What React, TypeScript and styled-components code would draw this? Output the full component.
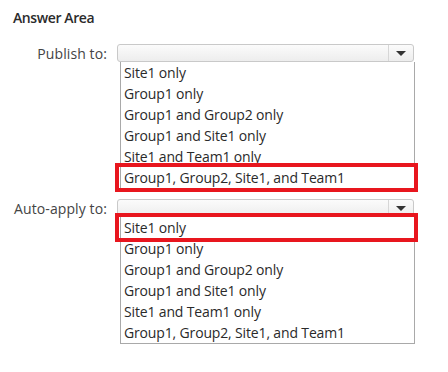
import React from 'react'
import styled, { createGlobalStyle } from 'styled-components'

const GlobalStyle = createGlobalStyle`
  body {
    margin: 0;
    background: #ffffff;
    font-family: "Open Sans", "Noto Sans", sans-serif;
  }
`

const Page = styled.div`
  width: 448px;
  height: 372px;
  padding: 8px 0 0 13px;
  box-sizing: border-box;
  background: #fff;
`

const Title = styled.div`
  font-size: 14px;
  line-height: 20px;
  font-weight: 600;
  color: #2b2b2b;
  letter-spacing: -0.4px;
`

const Form = styled.div`
  margin-top: 16px;
  display: grid;
  grid-template-columns: 104px 297px;
  row-gap: 10px;
`

const Label = styled.div`
  text-align: right;
  padding: 1px 10px 0 0;
  font-size: 14px;
  line-height: 18px;
  color: #444;
  letter-spacing: 0.1px;
  white-space: nowrap;
`

const Control = styled.div`
  display: flex;
  flex-direction: column;
`

const Select = styled.div`
  height: 18px;
  box-sizing: border-box;
  border: 1px solid #c9c9c9;
  border-radius: 3px;
  background: linear-gradient(#fbfbfb, #ededed);
  display: flex;
  justify-content: flex-end;
`

const ArrowBox = styled.div`
  width: 24px;
  border-left: 1px solid #d6d6d6;
  display: flex;
  align-items: center;
  justify-content: center;
`

const Arrow = styled.div`
  width: 0;
  height: 0;
  border-left: 5px solid transparent;
  border-right: 5px solid transparent;
  border-top: 5px solid #333;
`

const List = styled.ul`
  margin: 0 0 0 3px;
  padding: 0;
  list-style: none;
  width: 295px;
  box-sizing: border-box;
  border: 1px solid #a9a9a9;
  border-top: none;
  background: #fff;
`

const Item = styled.li<{ $marked?: boolean }>`
  position: relative;
  padding-left: 3px;
  font-size: 14px;
  line-height: 21px;
  color: #2a2a2a;
  letter-spacing: -0.15px;
  white-space: nowrap;

  ${({ $marked }) =>
    $marked &&
    `
    &::after {
      content: '';
      position: absolute;
      top: -4px;
      bottom: -4px;
      left: -6px;
      right: -4px;
      border: 4px solid #e8161e;
    }
  `}
`

const options = [
  'Site1 only',
  'Group1 only',
  'Group1 and Group2 only',
  'Group1 and Site1 only',
  'Site1 and Team1 only',
  'Group1, Group2, Site1, and Team1',
]

type FieldProps = {
  label: string
  marked: number
}

function Field({ label, marked }: FieldProps) {
  return (
    <>
      <Label>{label}</Label>
      <Control>
        <Select>
          <ArrowBox>
            <Arrow />
          </ArrowBox>
        </Select>
        <List>
          {options.map((o, i) => (
            <Item key={o} $marked={i === marked}>
              {o}
            </Item>
          ))}
        </List>
      </Control>
    </>
  )
}

export default function App() {
  return (
    <Page>
      <GlobalStyle />
      <Title>Answer Area</Title>
      <Form>
        <Field label="Publish to:" marked={5} />
        <Field label="Auto-apply to:" marked={0} />
      </Form>
    </Page>
  )
}
